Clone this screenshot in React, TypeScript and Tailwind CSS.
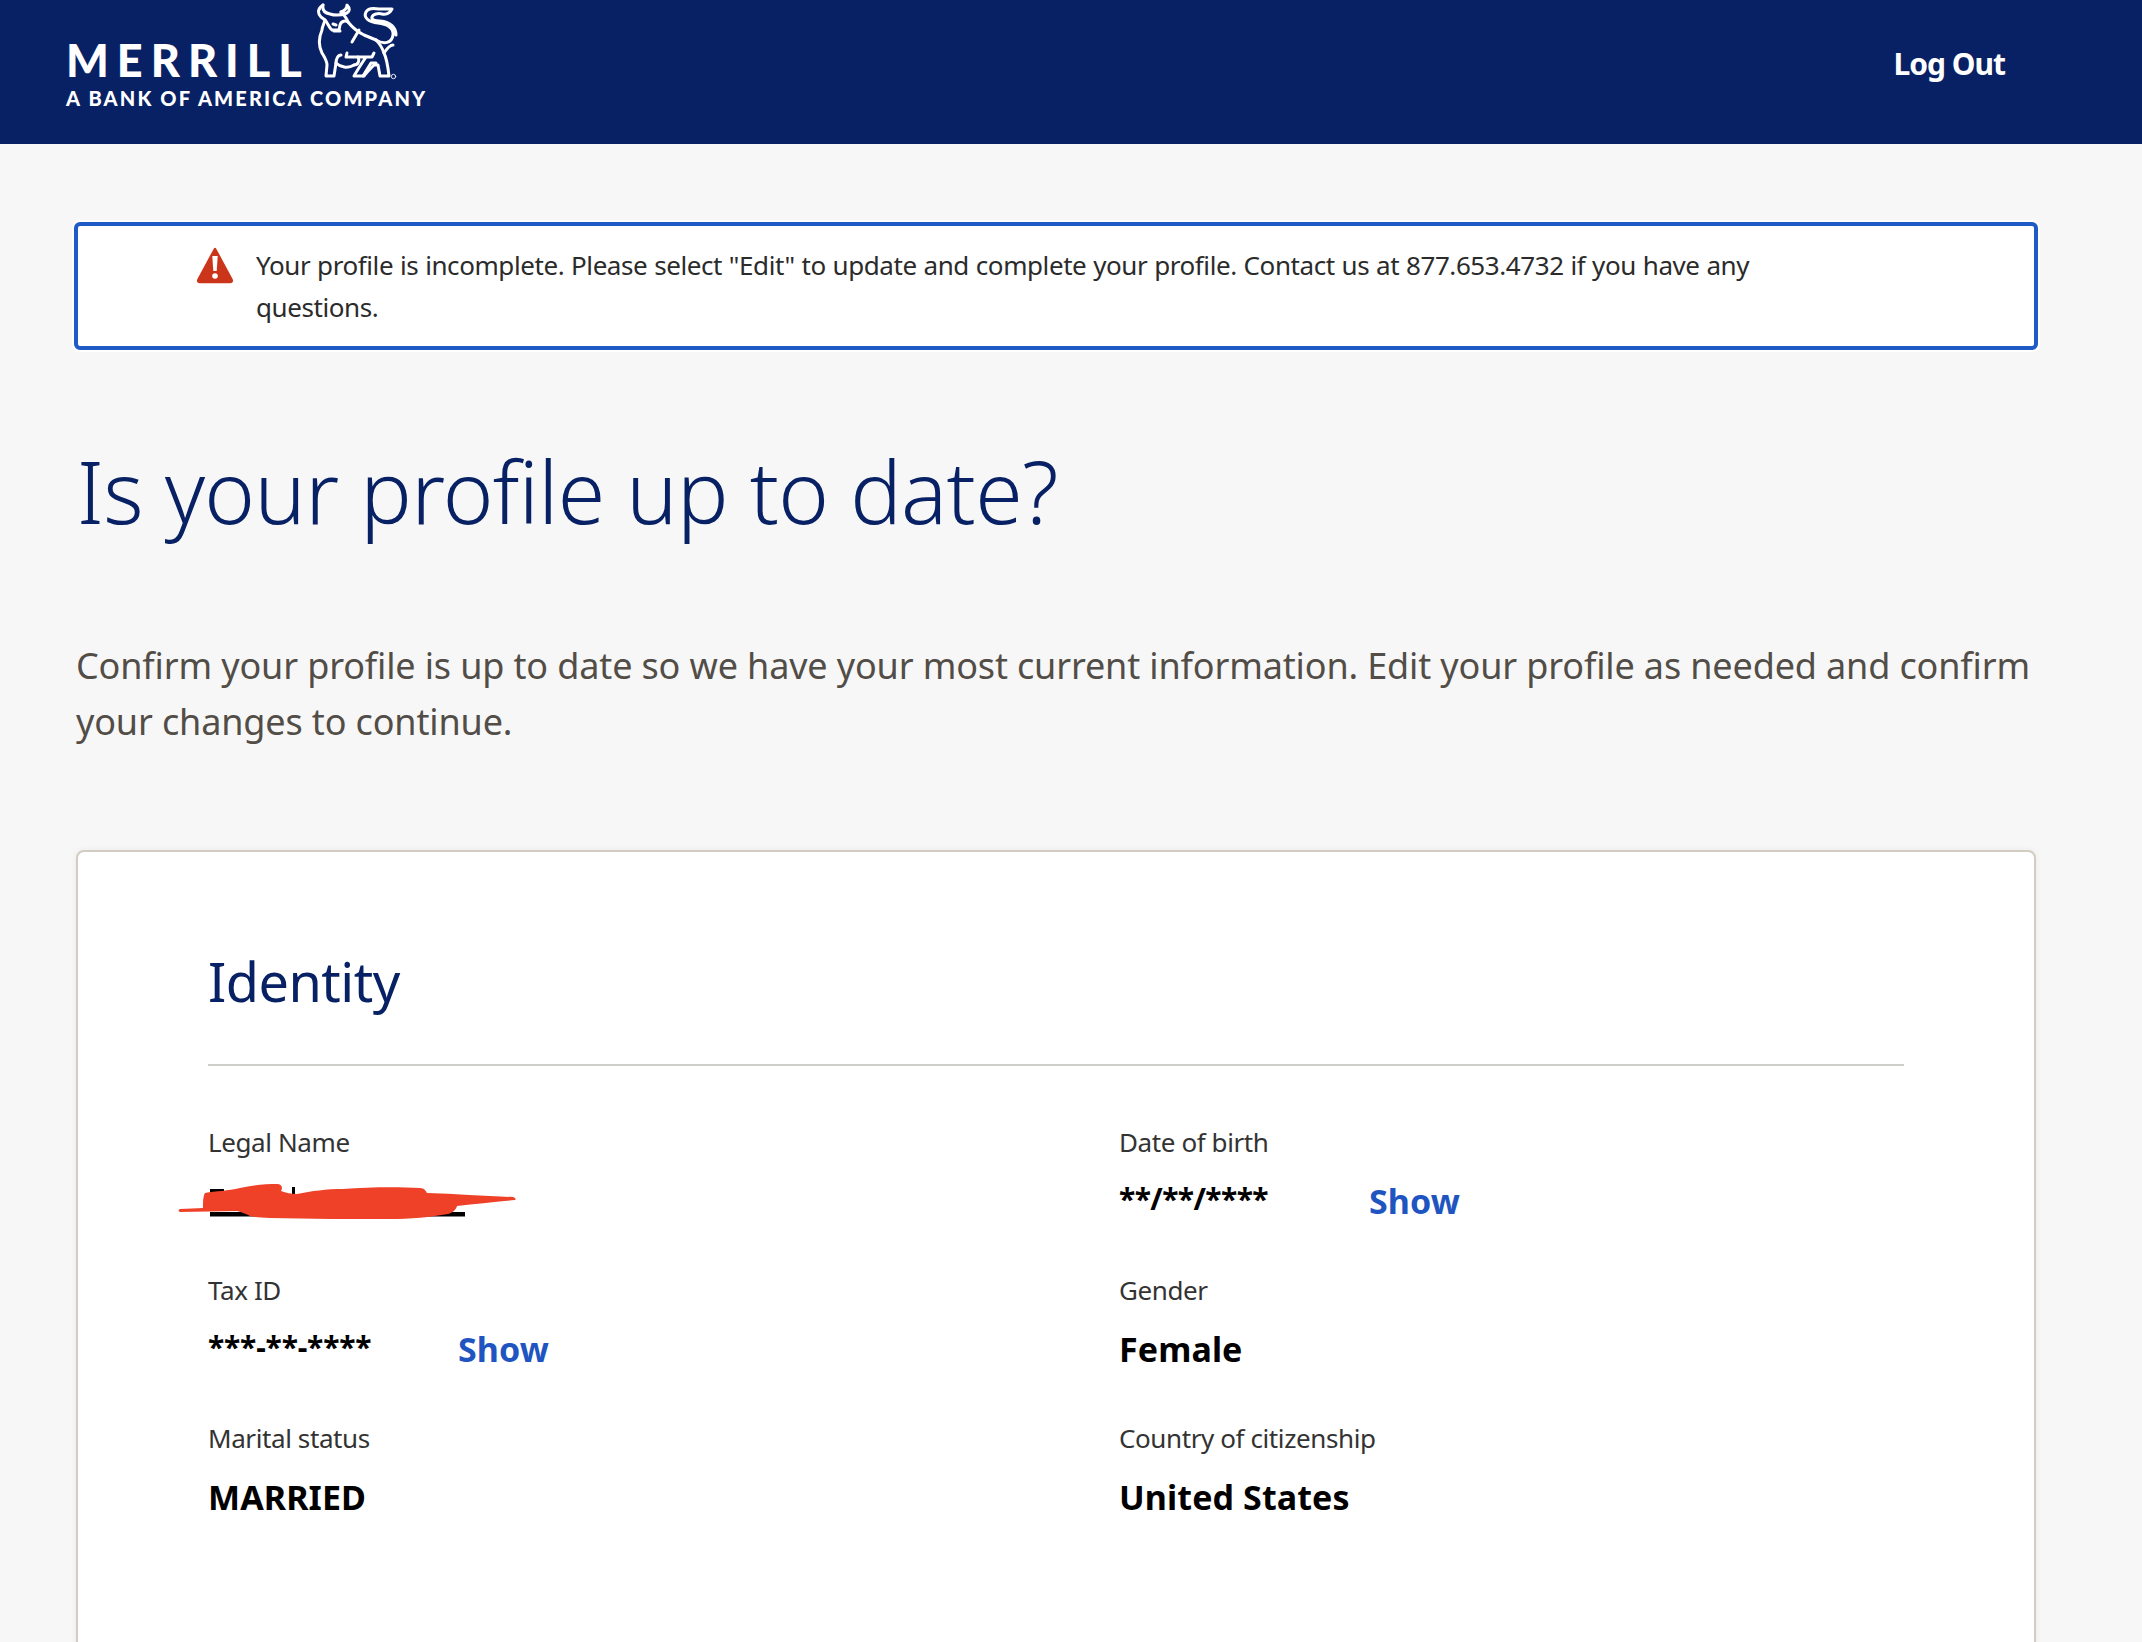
import React from "react";

const font = { fontFamily: '"Noto Sans", sans-serif' };

function Bull() {
  return (
    <svg width="84" height="78" viewBox="0 0 84 78" fill="none" stroke="white" strokeWidth="3" strokeLinejoin="round" strokeLinecap="round" className="shrink-0">
      <path d="M7 2 C2 5 1 10 5 14 L9 17 C8 21 6 24 6 27 C3 34 2 42 6 50 C9 55 11 58 11 62 L10 73 L18 73 L20 60 C24 64 32 66 38 62" />
      <path d="M7 2 C6 7 9 10 14 11 C20 13 26 12 31 10 C34 8 34 5 31 2 C31 6 28 8 25 9" />
      <path d="M9 17 C12 20 13 25 16 27 L23 27 L24 22 C25 18 30 17 32 19 C36 24 42 29 48 32 L60 37" />
      <path d="M25 9 C29 13 31 16 32 19" />
      <path d="M17 21 L20 22 M18 28 L24 28" />
      <path d="M43 27 L36 39 M38 62 C42 62 44 58 42 54 L30 54 L31 50" />
      <path d="M20 60 C20 56 22 52 25 52" />
      <path d="M42 54 L56 54 L58 50 M50 54 C46 60 42 66 38 73 L48 73 C51 69 54 66 58 62 L62 62 L64 73 L73 73 C72 64 71 56 68 50 C66 44 63 40 60 37" />
      <path d="M47 73 L55 60 L60 60" />
      <path d="M68 50 C72 44 74 42 77 42" />
      <path d="M60 37 C68 42 76 40 77 32 C78 24 70 21 62 20 C53 19 47 15 50 9 C52 5 58 5 63 6 L76 6 C74 10 70 12 66 11 C62 10 57 11 56 14 C55 17 60 18 64 18 C74 19 80 24 80 32" />
      <circle cx="77.5" cy="73.5" r="2.2" strokeWidth="0.9" />
    </svg>
  );
}

function Label({ children }: { children: React.ReactNode }) {
  return <div className="text-[26px] leading-[40px] tracking-[-0.4px] text-[#333333]">{children}</div>;
}

function Field({ label, value, masked, tight }: { label: string; value: string; masked?: boolean; tight?: boolean }) {
  return (
    <div className="h-[148px]">
      <Label>{label}</Label>
      <div className="mt-[15px] flex items-center text-[34px] leading-[48px] font-bold tracking-[0.1px] text-black">
        {masked ? (
          <>
            <span className={tight ? "mt-[-4px] w-[250px] text-[30px] tracking-[-0.6px]" : "mt-[-4px] w-[250px] text-[30px] tracking-[-0.2px]"}>{value}</span>
            <span className="text-[#1f55c0]">Show</span>
          </>
        ) : (
          <span>{value}</span>
        )}
      </div>
    </div>
  );
}

function RedactedName() {
  return (
    <div className="h-[148px]">
      <Label>Legal Name</Label>
      <div className="relative mt-[15px] h-[48px]">
        <svg className="absolute left-[-34px] top-[-4px]" width="350" height="60" viewBox="0 0 350 60">
          <path d="M36 39 H291 V43.5 H36 Z M36 16 H50 V24 H36 Z M118 14 H121 V22 H118 Z" fill="#000" />
          <path d="M6 36 C14 35.5 22 35.5 29 35 C29 30 29 23 31 20 C42 18 54 18 66 15 C78 12 92 11 103 11 C108 11 109 15 107 18 C112 20 117 21 123 21 C138 18 152 16 169 16 C195 14 225 14 246 15 C250 15 252 18 253 20 C282 21 312 23 339 24 C342 25 342 27 341 27 C322 29 302 31 283 33 C282 37 278 40 274 41 C258 44 235 46 216 46 C178 46 136 46 96 45 C88 45 80 44 76 43 C72 41 68 39 63 38 C44 38 24 39 6 39 C4 38 4 37 6 36 Z" fill="#ee4127" />
        </svg>
      </div>
    </div>
  );
}

export default function App() {
  return (
    <div className="h-[1642px] overflow-hidden bg-[#f7f7f7]" style={font}>
      <header className="flex h-[144px] items-start justify-between bg-[#082165] pl-[66px] pr-[137px] text-white">
        <div className="flex flex-col">
          <div className="flex items-start">
            <div className="mt-[32px] text-[45px] leading-[56px] font-black tracking-[8px]" style={{ fontFamily: "Lato, sans-serif" }}>MERRILL</div>
            <div className="ml-[6px] mt-[3px]"><Bull /></div>
          </div>
          <div className="mt-[-3px] whitespace-nowrap text-[20px] leading-[26px] font-black tracking-[2.15px]" style={{ fontFamily: "Lato, sans-serif" }}>A BANK OF AMERICA COMPANY</div>
        </div>
        <div className="mt-[42px] text-[30px] leading-[44px] font-bold tracking-[-1px]">Log Out</div>
      </header>

      <main className="pl-[74px] pr-[104px] pt-[78px]">
        <div className="flex h-[128px] gap-[22px] rounded-[6px] border-[4px] border-[#1f5bc4] bg-white pl-[118px] pr-[270px] pt-[18px] shadow-[0_0_0_2px_#ffffff]">
          <svg className="mt-[2px] shrink-0" width="38" height="38" viewBox="0 0 38 38">
            <path d="M19 3 L35.5 33.5 Q36.5 36 34 36 H4 Q1.5 36 2.5 33.5 Z" fill="#cb3519" stroke="#cb3519" strokeLinejoin="round" strokeWidth="2.5" />
            <path d="M16.3 10 H21.7 L20.7 25 H17.3 Z" fill="#fff" />
            <circle cx="19" cy="30" r="2.8" fill="#fff" />
          </svg>
          <p className="text-[26px] leading-[42px] tracking-[-0.42px] [word-spacing:0.5px] text-[#2b2b2b]">
            Your profile is incomplete. Please select "Edit" to update and complete your profile. Contact us at 877.653.4732 if you have any questions.
          </p>
        </div>

        <h1 className="mt-[86px] pl-[3px] text-[86px] leading-[110px] font-light tracking-[-0.6px] text-[#082165]">Is your profile up to date?</h1>

        <p className="mt-[92px] pl-[2px] text-[36px] leading-[56px] tracking-[-0.14px] text-[#524d47]">
          Confirm your profile is up to date so we have your most current information. Edit your profile as needed and confirm your changes to continue.
        </p>

        <section className="mx-[2px] mt-[100px] h-[900px] rounded-[8px] border-[2px] border-[#d3ccc2] bg-white px-[130px] pt-[94px] shadow-[0_0_6px_rgba(0,0,0,0.06)]">
          <h2 className="text-[54px] leading-[70px] font-normal tracking-[-0.5px] text-[#082165]">Identity</h2>
          <hr className="mt-[48px] border-0 border-t-[2px] border-[#cfcdc9]" />
          <div className="mt-[56px] grid grid-cols-[911px_1fr]">
            <RedactedName />
            <Field label="Date of birth" value="**/**/****" masked tight />
            <Field label="Tax ID" value="***-**-****" masked />
            <Field label="Gender" value="Female" />
            <Field label="Marital status" value="MARRIED" />
            <Field label="Country of citizenship" value="United States" />
          </div>
        </section>
      </main>
    </div>
  );
}
